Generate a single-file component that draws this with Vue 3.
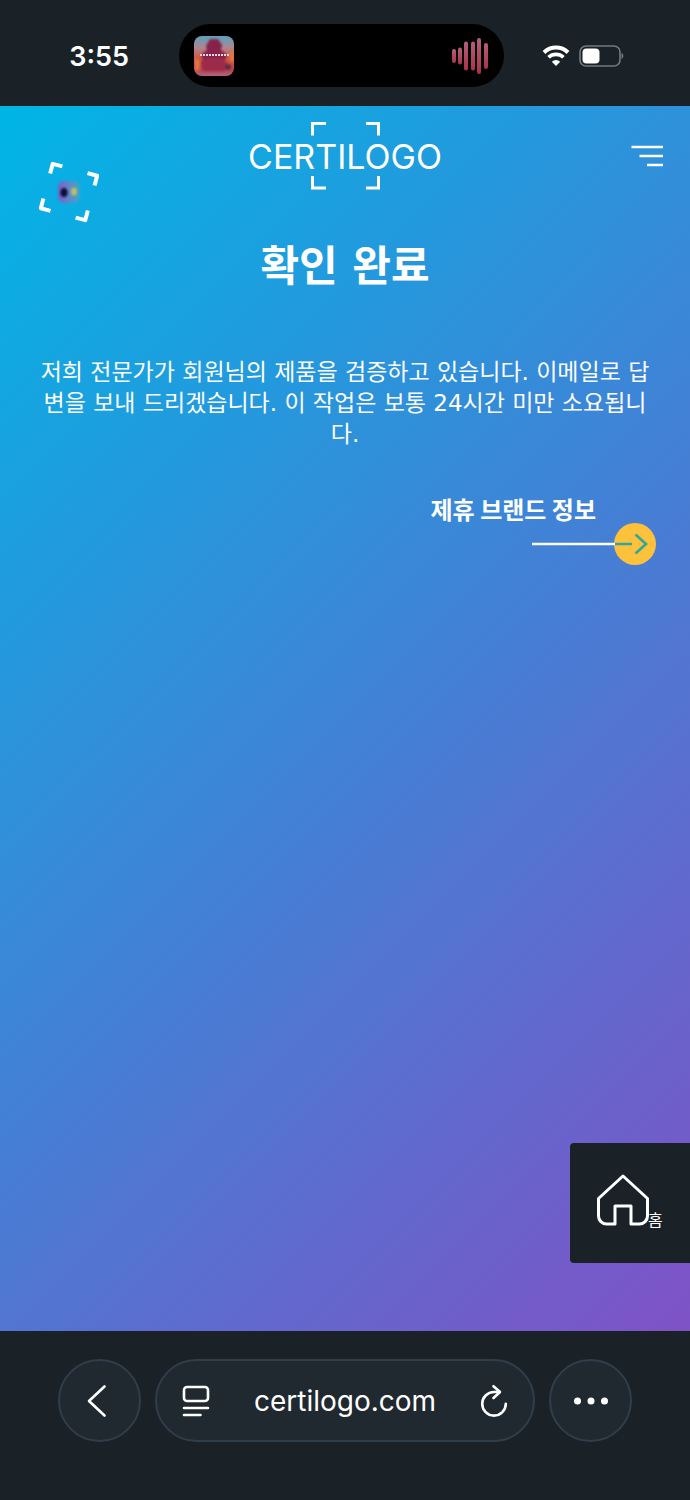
<script setup>
import { ref } from 'vue'

const address = ref('certilogo.com')

const bars = [
  { x: 0, h: 14 },
  { x: 6, h: 17 },
  { x: 12, h: 29 },
  { x: 19, h: 29 },
  { x: 25, h: 36 },
  { x: 32, h: 26 },
]
</script>

<template>
  <div class="phone">
    <header class="status">
      <time class="clock">3:55</time>
      <div class="island">
        <svg class="cover" width="40" height="40" viewBox="0 0 40 40" aria-hidden="true">
          <defs>
            <linearGradient id="cover-sky" x1="0" y1="0" x2="0" y2="1">
              <stop offset="0" stop-color="#5ba3bd" />
              <stop offset="0.3" stop-color="#b08590" />
              <stop offset="0.55" stop-color="#d2583f" />
              <stop offset="0.85" stop-color="#bd4548" />
              <stop offset="1" stop-color="#a8648a" />
            </linearGradient>
            <clipPath id="cover-clip"><rect width="40" height="40" rx="8" /></clipPath>
            <filter id="cover-soft"><feGaussianBlur stdDeviation="1" /></filter>
          </defs>
          <g clip-path="url(#cover-clip)">
            <rect width="40" height="40" fill="url(#cover-sky)" />
            <g filter="url(#cover-soft)">
              <path d="M16 3h8l4 6-1 5 6 5-2 5H9l-2-5 6-5-1-4z" fill="#86204c" />
              <path d="M6 26l8-4h14l5 5-2 8H9z" fill="#9c2c4b" />
              <circle cx="34" cy="31" r="3" fill="#5b2c49" />
              <path d="M1 22l5 3-1 9-4 1zM36 16l4-2v12l-4-1z" fill="#e2783f" />
            </g>
            <path d="M6 19h29" stroke="#f3d8d8" stroke-width="2" stroke-dasharray="2 1" />
          </g>
        </svg>
        <svg class="wave" width="36" height="38" viewBox="0 0 36 38" aria-hidden="true">
          <defs>
            <linearGradient id="wave-tint" x1="0" y1="0" x2="0" y2="1">
              <stop offset="0" stop-color="#b2607c" />
              <stop offset="1" stop-color="#a93347" />
            </linearGradient>
          </defs>
          <rect
            v-for="bar in bars"
            :key="bar.x"
            :x="bar.x"
            :y="19 - bar.h / 2"
            width="4"
            :height="bar.h"
            rx="2"
            fill="url(#wave-tint)"
          />
        </svg>
      </div>
      <div class="signals">
        <svg width="28" height="22" viewBox="0 0 28 22" fill="none" stroke="#fff" role="img" aria-label="Wi-Fi">
          <path d="M2 7.5a17.2 17.2 0 0 1 24 0" stroke-width="4" />
          <path d="M6.5 12.3a11 11 0 0 1 15 0" stroke-width="3.6" />
          <path d="M14 21l-4.2-4.2a6 6 0 0 1 8.4 0z" fill="#fff" stroke="none" />
        </svg>
        <svg width="45" height="22" viewBox="0 0 45 22" role="img" aria-label="Battery">
          <rect x="1" y="1" width="40" height="20" rx="6" fill="none" stroke="#737a80" stroke-width="1.6" />
          <rect x="3.5" y="3.5" width="17" height="15" rx="4" fill="#fff" />
          <path d="M42.5 8c2.4.8 2.4 5.2 0 6z" fill="#737a80" />
        </svg>
      </div>
    </header>

    <main class="page">
      <div class="top">
        <svg class="lens" width="64" height="64" viewBox="0 0 64 64" aria-hidden="true">
          <defs>
            <linearGradient id="lens-body" x1="0" x2="1">
              <stop offset="0" stop-color="#7d5cc8" />
              <stop offset="0.5" stop-color="#6188c8" />
              <stop offset="1" stop-color="#37a8c9" />
            </linearGradient>
            <filter id="lens-soft" x="-30%" y="-30%" width="160%" height="160%">
              <feGaussianBlur stdDeviation="1" />
            </filter>
          </defs>
          <g transform="rotate(15 32 32)" fill="none" stroke="#fff" stroke-width="4" stroke-linejoin="round">
            <path d="M9 19V9h10M45 9h10v10M55 45v10H45M19 55H9V45" />
          </g>
          <rect x="21" y="21" width="22" height="22" rx="6" fill="url(#lens-body)" filter="url(#lens-soft)" />
          <ellipse cx="27" cy="32.5" rx="3.5" ry="4.5" fill="#100a35" filter="url(#lens-soft)" />
          <ellipse cx="37" cy="31.5" rx="3" ry="4" fill="#c5bb66" filter="url(#lens-soft)" />
        </svg>
        <a class="logo" href="#" aria-label="Certilogo">
          <svg width="194" height="70" viewBox="0 0 194 70">
            <g fill="none" stroke="#fff" stroke-width="3">
              <path d="M64.500 14.500v-12h13.500M118 2.500h12.500v12M130.500 55v12h-12.500M78 67h-13.500v-12" />
            </g>
            <text class="wordmark" x="97" y="48" text-anchor="middle">CERTILOGO</text>
          </svg>
        </a>
        <button class="menu" type="button" aria-label="Menu">
          <svg width="32" height="24" viewBox="0 0 32 24" stroke="#fff" stroke-width="2.6">
            <path d="M0.500 3h31.500M8.500 12h23.500M16 21h16" />
          </svg>
        </button>
      </div>

      <h1>확인 완료</h1>
      <p class="message">
        저희 전문가가 회원님의 제품을 검증하고 있습니다. 이메일로 답변을 보내 드리겠습니다. 이 작업은 보통 24시간 미만 소요됩니다.
      </p>

      <a class="brand" href="#">
        <span>제휴 브랜드 정보</span>
        <svg width="126" height="42" viewBox="0 0 126 42" fill="none" aria-hidden="true">
          <circle cx="105" cy="21" r="21" fill="#fdc13c" />
          <path d="M2 21h83" stroke="#fff" stroke-width="2.6" />
          <path d="M85 21h17M105.5 11.500l10.500 9.500-10.500 9.500" stroke="#32a79b" stroke-width="2.6" />
        </svg>
      </a>

      <a class="home" href="#">
        <svg width="54" height="54" viewBox="0 0 54 54" fill="none" stroke="#fff" stroke-width="3" aria-hidden="true">
          <path
            d="M27 3L2.500 25.500V43a8 8 0 0 0 8 8H19V33h16v18h8.500a8 8 0 0 0 8-8V25.500z"
            stroke-linejoin="round"
          />
        </svg>
        <span>홈</span>
      </a>
    </main>

    <nav class="browser">
      <button class="round" type="button" aria-label="Back">
        <svg width="20" height="34" viewBox="0 0 20 34" fill="none" stroke="#fff" stroke-width="2.6">
          <path d="M17.500 2.500L2 17l15.500 14.500" stroke-linecap="round" stroke-linejoin="round" />
        </svg>
      </button>
      <div class="bar">
        <button class="tool" type="button" aria-label="Page menu">
          <svg width="28" height="32" viewBox="0 0 28 32" fill="none" stroke="#fff" stroke-width="2.6">
            <rect x="2" y="2" width="24" height="14" rx="3" />
            <path d="M2 23h24M2 30h16.500" stroke-linecap="round" />
          </svg>
        </button>
        <input v-model="address" class="address" type="text" aria-label="Address" />
        <button class="tool" type="button" aria-label="Reload">
          <svg width="28" height="34" viewBox="0 0 28 34" fill="none" stroke="#fff" stroke-width="2.6">
            <path
              d="M19.500 8H14a11.800 11.800 0 1 0 11.800 11.800M13.500 2.200L20 8l-6.500 6"
              stroke-linecap="round"
              stroke-linejoin="round"
            />
          </svg>
        </button>
      </div>
      <button class="round" type="button" aria-label="More">
        <svg width="34" height="8" viewBox="0 0 34 8" fill="#fff">
          <circle cx="3.500" cy="4" r="3.500" />
          <circle cx="17" cy="4" r="3.500" />
          <circle cx="30.500" cy="4" r="3.500" />
        </svg>
      </button>
    </nav>
  </div>
</template>

<style>
body {
  background: #1a2127;
}
</style>

<style scoped>
.phone {
  display: flex;
  flex-direction: column;
  min-height: 100vh;
  background: #1a2127;
  color: #fff;
  font-family: "Noto Sans CJK KR", sans-serif;
}

svg {
  display: block;
  flex: none;
}

a {
  color: inherit;
  text-decoration: none;
}

button {
  display: flex;
  align-items: center;
  justify-content: center;
  padding: 0;
  border: 0;
  background: none;
  color: inherit;
}

.status {
  display: grid;
  grid-template-columns: 1fr 325px 1fr;
  align-items: center;
  padding: 24px 7px 19px 0;
}

.clock {
  justify-self: end;
  padding: 2px 50px 0 0;
  font: 600 27px/32px Inter, sans-serif;
}

.island {
  display: flex;
  align-items: center;
  justify-content: space-between;
  height: 63px;
  padding: 0 16px 0 15px;
  box-sizing: border-box;
  border-radius: 32px;
  background: #000;
}

.signals {
  display: flex;
  align-items: center;
  gap: 9px;
  padding-left: 38px;
}

.page {
  display: flex;
  flex: 1;
  flex-direction: column;
  background: linear-gradient(135deg, #00b5e6, #7f52c6);
}

.top {
  display: grid;
  grid-template-columns: 1fr auto 1fr;
  align-items: start;
  padding: 15px 27px 0;
}

.lens {
  margin: 39px 0 0 10px;
}

.wordmark {
  fill: #fff;
  font: 400 34px Inter, sans-serif;
}

.menu {
  justify-self: end;
  margin-top: 23px;
}

h1 {
  margin: 11px 0 0;
  font-family: "DejaVu Sans", "Noto Sans CJK KR", sans-serif;
  font-size: 42px;
  font-weight: 700;
  line-height: 64px;
  text-align: center;
}

.message {
  margin: 58px 36px 0;
  font-family: "DejaVu Sans", "Noto Sans CJK KR", sans-serif;
  font-size: 23px;
  line-height: 31px;
  text-align: center;
}

.brand {
  display: flex;
  flex-direction: column;
  align-items: flex-end;
  align-self: flex-end;
  margin: 45px 34px 0 0;
  font-size: 24px;
  font-weight: 700;
  line-height: 28px;
}

.brand span {
  padding-right: 60px;
}

.home {
  display: flex;
  align-items: center;
  align-self: flex-end;
  width: 94px;
  height: 120px;
  margin: auto 0 68px;
  padding-left: 26px;
  border-radius: 4px 0 0 4px;
  background: #1a2127;
}

.home svg {
  margin-bottom: 6px;
}

.home span {
  margin: 32px 0 0 -2px;
  font-size: 16px;
  line-height: 20px;
}

.browser {
  display: flex;
  align-items: center;
  gap: 14px;
  padding: 28px 58px 58px;
}

.round,
.bar {
  height: 83px;
  box-sizing: border-box;
  border: 2px solid #303e4b;
  border-radius: 42px;
  background: #202930;
}

.round {
  flex: none;
  width: 83px;
}

.round:first-child {
  padding-right: 6px;
}

.bar {
  display: flex;
  flex: 1;
  align-items: center;
  min-width: 0;
  padding: 0 25px;
}

.tool {
  flex: none;
}

.address {
  flex: 1;
  min-width: 0;
  padding: 0;
  border: 0;
  outline: 0;
  background: none;
  color: #fff;
  font: 400 28px/36px Inter, sans-serif;
  text-align: center;
}
</style>
